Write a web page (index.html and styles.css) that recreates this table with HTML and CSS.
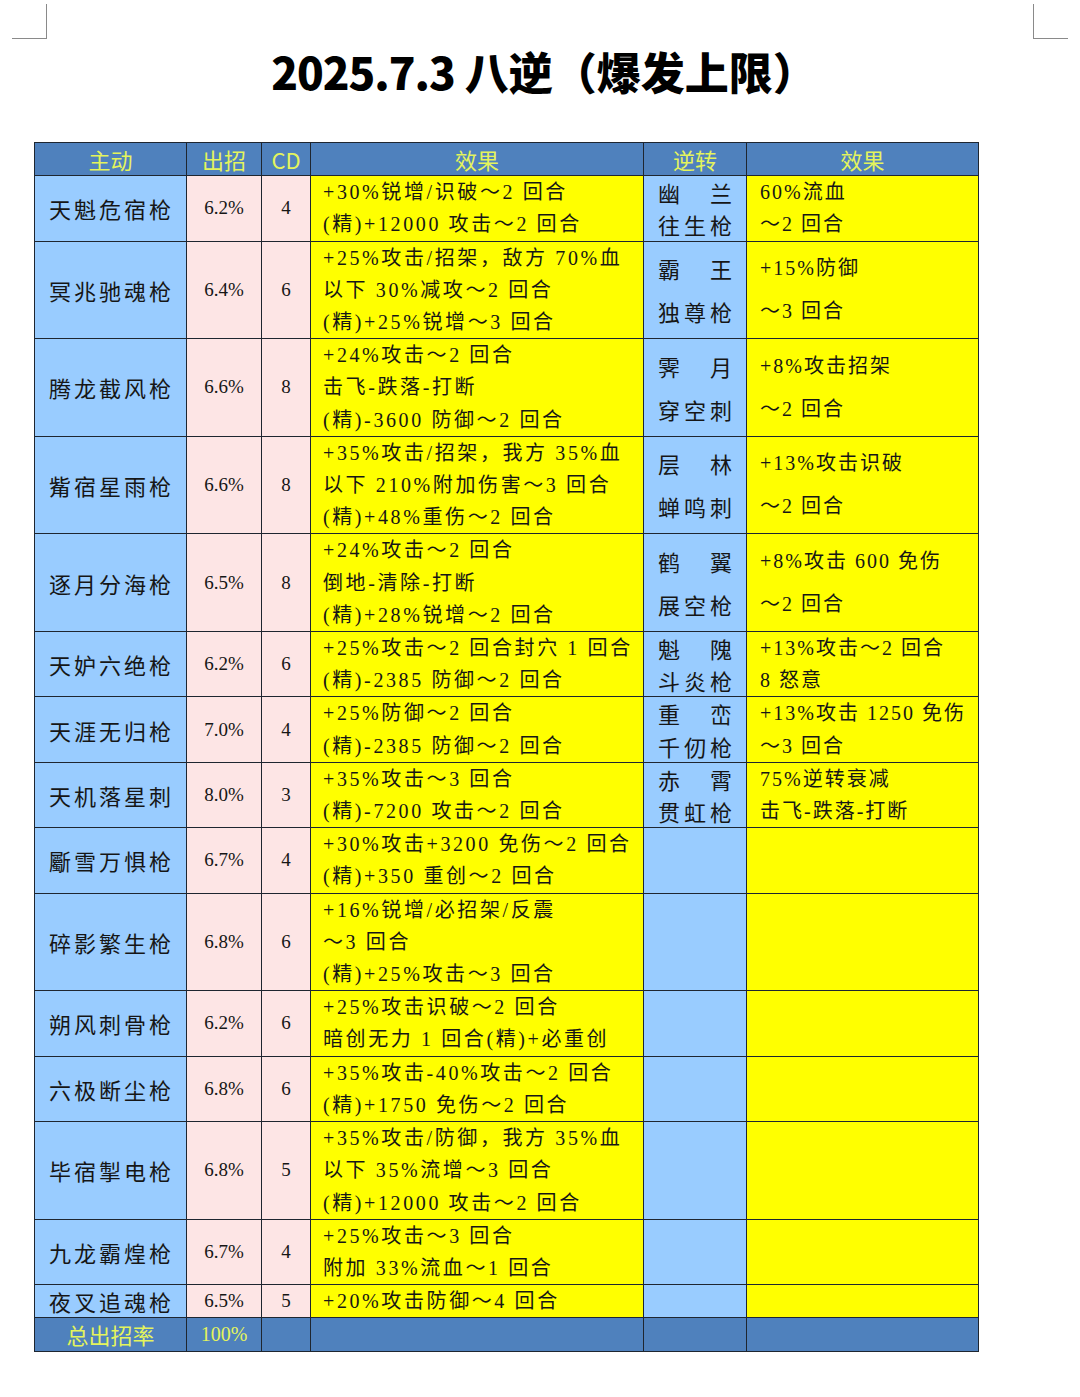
FILE: index.html
```html
<!DOCTYPE html>
<html lang="zh-CN">
<head>
<meta charset="utf-8">
<title>2025.7.3 八逆（爆发上限）</title>
<link rel="stylesheet" href="styles.css">
</head>
<body>
<div class="page">
  <div class="marks">
    <span class="mark mark-left"></span>
    <span class="mark mark-right"></span>
  </div>
  <h1 class="title"><span class="date">2025.7.3</span> 八逆（爆发上限）</h1>

  <div class="sheet">
    <div class="c hd">主动</div>
    <div class="c hd">出招</div>
    <div class="c hd">CD</div>
    <div class="c hd">效果</div>
    <div class="c hd">逆转</div>
    <div class="c hd">效果</div>

    <div class="c name">天魁危宿枪</div>
    <div class="c rate">6.2%</div>
    <div class="c cd">4</div>
    <div class="c eff"><p>+30%锐增/识破～2 回合</p><p>(精)+12000 攻击～2 回合</p></div>
    <div class="c rv"><p>幽 兰</p><p>往生枪</p></div>
    <div class="c reff"><p>60%流血</p><p>～2 回合</p></div>

    <div class="c name">冥兆驰魂枪</div>
    <div class="c rate">6.4%</div>
    <div class="c cd">6</div>
    <div class="c eff"><p>+25%攻击/招架，敌方 70%血</p><p>以下 30%减攻～2 回合</p><p>(精)+25%锐增～3 回合</p></div>
    <div class="c rv tall"><p>霸 王</p><p>独尊枪</p></div>
    <div class="c reff tall"><p>+15%防御</p><p>～3 回合</p></div>

    <div class="c name">腾龙截风枪</div>
    <div class="c rate">6.6%</div>
    <div class="c cd">8</div>
    <div class="c eff"><p>+24%攻击～2 回合</p><p>击飞-跌落-打断</p><p>(精)-3600 防御～2 回合</p></div>
    <div class="c rv tall"><p>霁 月</p><p>穿空刺</p></div>
    <div class="c reff tall"><p>+8%攻击招架</p><p>～2 回合</p></div>

    <div class="c name">觜宿星雨枪</div>
    <div class="c rate">6.6%</div>
    <div class="c cd">8</div>
    <div class="c eff"><p>+35%攻击/招架，我方 35%血</p><p>以下 210%附加伤害～3 回合</p><p>(精)+48%重伤～2 回合</p></div>
    <div class="c rv tall"><p>层 林</p><p>蝉鸣刺</p></div>
    <div class="c reff tall"><p>+13%攻击识破</p><p>～2 回合</p></div>

    <div class="c name">逐月分海枪</div>
    <div class="c rate">6.5%</div>
    <div class="c cd">8</div>
    <div class="c eff"><p>+24%攻击～2 回合</p><p>倒地-清除-打断</p><p>(精)+28%锐增～2 回合</p></div>
    <div class="c rv tall"><p>鹤 翼</p><p>展空枪</p></div>
    <div class="c reff tall"><p>+8%攻击 600 免伤</p><p>～2 回合</p></div>

    <div class="c name">天妒六绝枪</div>
    <div class="c rate">6.2%</div>
    <div class="c cd">6</div>
    <div class="c eff"><p>+25%攻击～2 回合封穴 1 回合</p><p>(精)-2385 防御～2 回合</p></div>
    <div class="c rv"><p>魁 隗</p><p>斗炎枪</p></div>
    <div class="c reff"><p>+13%攻击～2 回合</p><p>8 怒意</p></div>

    <div class="c name">天涯无归枪</div>
    <div class="c rate">7.0%</div>
    <div class="c cd">4</div>
    <div class="c eff"><p>+25%防御～2 回合</p><p>(精)-2385 防御～2 回合</p></div>
    <div class="c rv"><p>重 峦</p><p>千仞枪</p></div>
    <div class="c reff"><p>+13%攻击 1250 免伤</p><p>～3 回合</p></div>

    <div class="c name">天机落星刺</div>
    <div class="c rate">8.0%</div>
    <div class="c cd">3</div>
    <div class="c eff"><p>+35%攻击～3 回合</p><p>(精)-7200 攻击～2 回合</p></div>
    <div class="c rv"><p>赤 霄</p><p>贯虹枪</p></div>
    <div class="c reff"><p>75%逆转衰减</p><p>击飞-跌落-打断</p></div>

    <div class="c name">斸雪万惧枪</div>
    <div class="c rate">6.7%</div>
    <div class="c cd">4</div>
    <div class="c eff"><p>+30%攻击+3200 免伤～2 回合</p><p>(精)+350 重创～2 回合</p></div>
    <div class="c rv"></div>
    <div class="c reff"></div>

    <div class="c name">碎影繁生枪</div>
    <div class="c rate">6.8%</div>
    <div class="c cd">6</div>
    <div class="c eff"><p>+16%锐增/必招架/反震</p><p>～3 回合</p><p>(精)+25%攻击～3 回合</p></div>
    <div class="c rv"></div>
    <div class="c reff"></div>

    <div class="c name">朔风刺骨枪</div>
    <div class="c rate">6.2%</div>
    <div class="c cd">6</div>
    <div class="c eff"><p>+25%攻击识破～2 回合</p><p>暗创无力 1 回合(精)+必重创</p></div>
    <div class="c rv"></div>
    <div class="c reff"></div>

    <div class="c name">六极断尘枪</div>
    <div class="c rate">6.8%</div>
    <div class="c cd">6</div>
    <div class="c eff"><p>+35%攻击-40%攻击～2 回合</p><p>(精)+1750 免伤～2 回合</p></div>
    <div class="c rv"></div>
    <div class="c reff"></div>

    <div class="c name">毕宿掣电枪</div>
    <div class="c rate">6.8%</div>
    <div class="c cd">5</div>
    <div class="c eff"><p>+35%攻击/防御，我方 35%血</p><p>以下 35%流增～3 回合</p><p>(精)+12000 攻击～2 回合</p></div>
    <div class="c rv"></div>
    <div class="c reff"></div>

    <div class="c name">九龙霸煌枪</div>
    <div class="c rate">6.7%</div>
    <div class="c cd">4</div>
    <div class="c eff"><p>+25%攻击～3 回合</p><p>附加 33%流血～1 回合</p></div>
    <div class="c rv"></div>
    <div class="c reff"></div>

    <div class="c name">夜叉追魂枪</div>
    <div class="c rate">6.5%</div>
    <div class="c cd">5</div>
    <div class="c eff"><p>+20%攻击防御～4 回合</p></div>
    <div class="c rv"></div>
    <div class="c reff"></div>

    <div class="c ft">总出招率</div>
    <div class="c ft ftnum">100%</div>
    <div class="c ft"></div>
    <div class="c ft"></div>
    <div class="c ft"></div>
    <div class="c ft"></div>
  </div>
</div>
</body>
</html>
```

FILE: styles.css
```css
* { box-sizing: border-box; }

html, body {
  margin: 0;
  padding: 0;
  background: #ffffff;
}

body {
  font-family: "Liberation Serif", "Noto Sans CJK SC", serif;
  color: #161616;
}

.page {
  width: 1080px;
  min-height: 1397px;
}

.marks {
  display: flex;
  justify-content: space-between;
  padding: 4px 12px 0 12px;
}

.mark {
  display: block;
  width: 35px;
  height: 35px;
  border-bottom: 1.5px solid #8a8a8a;
}

.mark-left { border-right: 1.5px solid #8a8a8a; }
.mark-right { border-left: 1.5px solid #8a8a8a; }

.title {
  margin: 7px 0 0 8px;
  text-align: center;
  font-family: "Noto Sans CJK SC", sans-serif;
  font-weight: 900;
  font-size: 44px;
  line-height: 50px;
  color: #000;
  white-space: nowrap;
}

.date {
  letter-spacing: -1px;
}

.sheet {
  margin: 46px 0 0 34px;
  width: 945px;
  display: grid;
  grid-template-columns: 151px 74px 48px 332px 102px 231px;
  gap: 1px;
  padding: 1px;
  background: #1e2630;
}

.c {
  display: flex;
  flex-direction: column;
  justify-content: center;
  line-height: 32.2px;
  font-size: 20px;
  min-height: 32px;
}

.c p { margin: 0; white-space: nowrap; }

.hd, .ft {
  background: #4f81bd;
  color: #e4f45c;
  font-family: "Noto Sans CJK SC", sans-serif;
  font-size: 22px;
  text-align: center;
  align-items: center;
}

.ftnum {
  font-family: "Liberation Serif", serif;
  font-size: 20px;
}

.name {
  background: #99ccff;
  align-items: center;
  font-family: "Noto Sans CJK SC", sans-serif;
  font-size: 22px;
  letter-spacing: 3px;
  padding-left: 2px;
}

.rate, .cd {
  background: #fde5e5;
  align-items: center;
  font-size: 19px;
}

.eff {
  background: #ffff00;
  padding-left: 12px;
  font-size: 20px;
  letter-spacing: 2.6px;
}

.rv {
  background: #99ccff;
  align-items: center;
  font-family: "Noto Sans CJK SC", sans-serif;
  font-size: 22px;
}

.rv p {
  width: 74px;
  text-align: justify;
  text-align-last: justify;
}

.reff {
  background: #ffff00;
  padding-left: 13px;
  font-size: 20px;
  letter-spacing: 2px;
}

.tall { line-height: 43px; }
```
